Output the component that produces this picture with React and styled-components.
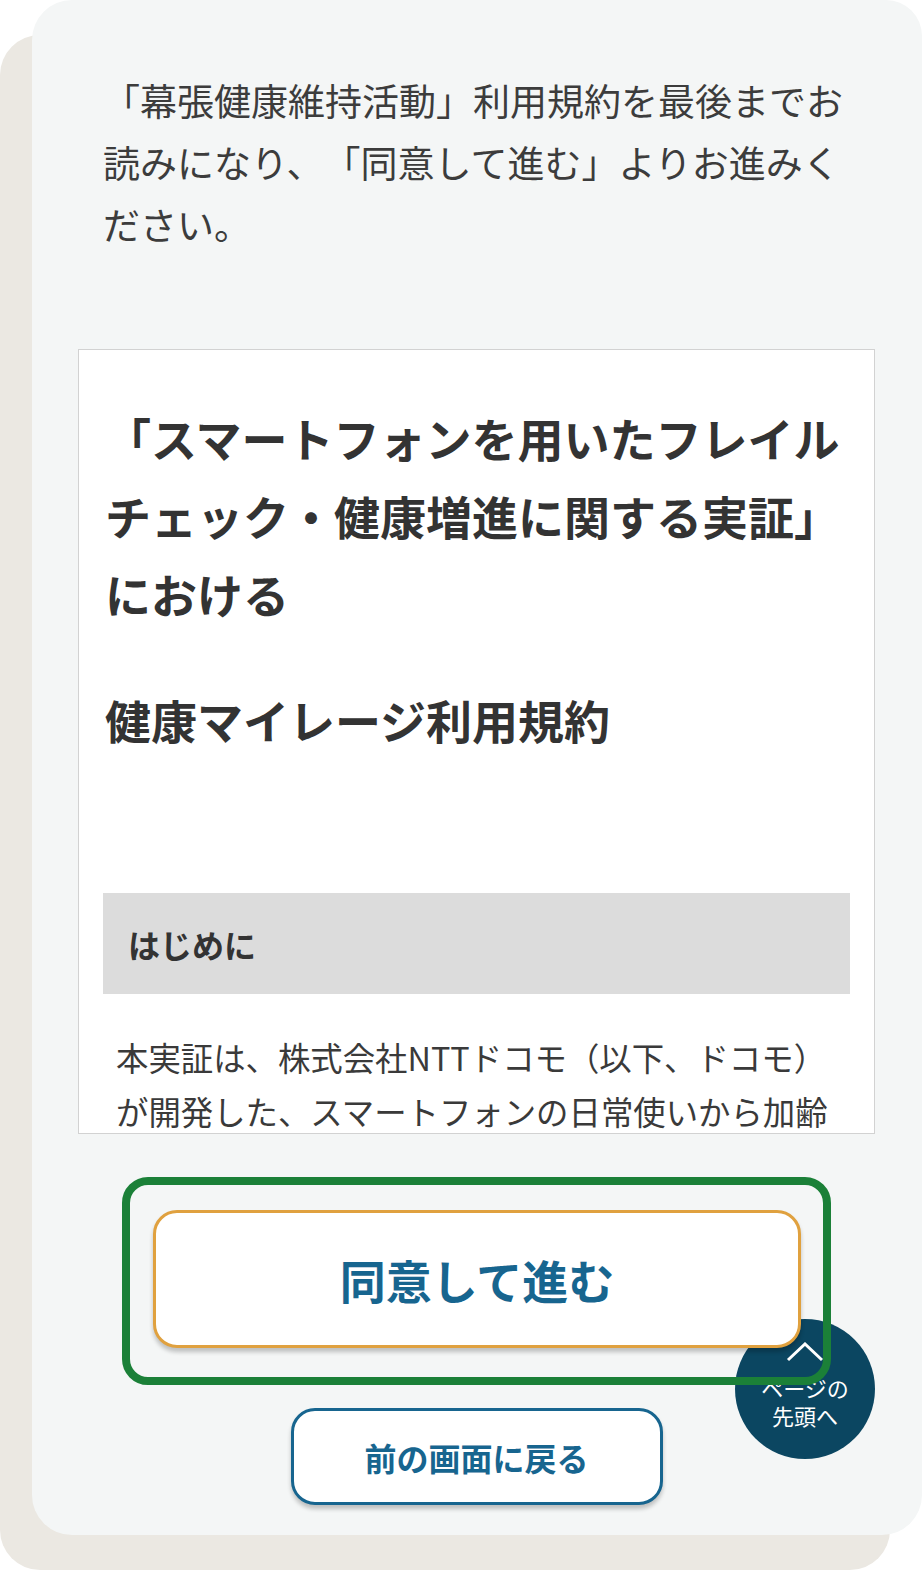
import React from 'react';
import styled, { createGlobalStyle } from 'styled-components';

const GlobalStyle = createGlobalStyle`
  html, body {
    margin: 0;
    padding: 0;
    background: #ffffff;
  }
  body {
    font-family: "Noto Sans CJK JP", "Noto Sans", sans-serif;
    color: #3a3a3a;
    text-spacing-trim: space-all;
  }
  * {
    box-sizing: border-box;
  }
`;

const Screen = styled.div`
  width: 922px;
  height: 1570px;
  overflow: hidden;
`;

const Card = styled.main`
  position: relative;
  margin-left: 32px;
  width: 890px;
  min-height: 1535px;
  padding: 69px 47px 30px 46px;
  background: #f4f6f6;
  border-radius: 40px 36px 40px 40px;
  box-shadow: -32px 35px 0 0 #ebe8e2;
`;

const Intro = styled.p`
  margin: 0;
  padding: 0 20px 0 25px;
  font-size: 37px;
  line-height: 62px;
  color: #3c3c3c;
  text-spacing-trim: space-all;
`;

const TermsBox = styled.section`
  margin-top: 94px;
  height: 785px;
  padding: 48px 24px 0 24px;
  background: #ffffff;
  border: 1px solid #d2d2d2;
  overflow: hidden;
`;

const Title = styled.h1`
  margin: ${p => (p.$gap ? '48px' : '0')} 0 0;
  padding-left: 2px;
  font-size: 46px;
  line-height: 78px;
  font-weight: 700;
  color: #333333;
`;

const SectionBar = styled.h3`
  margin: 135px 0 0;
  height: 101px;
  padding-left: 25px;
  display: flex;
  align-items: center;
  background: #dcdcdc;
  font-size: 32px;
  font-weight: 700;
  color: #333333;
`;

const Body = styled.p`
  margin: 36px 0 0;
  padding: 0 4px 0 13px;
  font-size: 32.4px;
  line-height: 54px;
  color: #3a3a3a;
`;

const FocusRing = styled.div`
  position: relative;
  z-index: 1;
  width: 709px;
  margin: 43px auto 0;
  padding: 25px 22px 29px 23px;
  border: 8px solid #1b8038;
  border-radius: 26px;
`;

const Button = styled.button`
  display: flex;
  align-items: center;
  justify-content: center;
  width: ${p => p.$width}px;
  height: ${p => p.$height}px;
  margin: 0 auto;
  padding: 0;
  background: #ffffff;
  border: 3px solid ${p => p.$border};
  border-radius: 24px;
  box-shadow: 0 4px 4px rgba(0, 0, 0, 0.22);
  font-family: "Noto Sans CJK JP", "Noto Sans", sans-serif;
  font-size: ${p => p.$size}px;
  font-weight: 700;
  color: #17658f;
  cursor: pointer;
`;

const BackRow = styled.div`
  margin-top: 23px;
`;

const PageTop = styled.a`
  position: absolute;
  right: 47px;
  bottom: 76px;
  z-index: 0;
  width: 140px;
  height: 140px;
  border-radius: 50%;
  background: #0b4661;
  display: flex;
  flex-direction: column;
  align-items: center;
  padding-top: 23px;
  color: #ffffff;
  font-size: 22px;
  line-height: 28px;
  text-align: center;
  text-decoration: none;
`;

const PageTopLabel = styled.span`
  margin-top: 11px;
`;

function Chevron() {
  return (
    <svg width="40" height="20" viewBox="0 0 40 20">
      <polyline points="3,18 20,2 37,18" fill="none" stroke="#ffffff" strokeWidth="3" />
    </svg>
  );
}

export default function App() {
  return (
    <Screen>
      <GlobalStyle />
      <Card>
        <Intro>
          「幕張健康維持活動」利用規約を最後までお読みになり、「同意して進む」よりお進みください。
        </Intro>

        <TermsBox>
          <Title>「スマートフォンを用いたフレイルチェック・健康増進に関する実証」における</Title>
          <Title $gap>健康マイレージ利用規約</Title>
          <SectionBar>はじめに</SectionBar>
          <Body>
            本実証は、株式会社NTTドコモ（以下、ドコモ）が開発した、スマートフォンの日常使いから加齢による心身の活力の低下を推定する技術を活用し、健康増進に関する効果を検証するものです。
          </Body>
        </TermsBox>

        <FocusRing>
          <Button $width={648} $height={138} $size={46} $border="#e0a13f">
            同意して進む
          </Button>
        </FocusRing>

        <BackRow>
          <Button $width={372} $height={97} $size={32} $border="#17658f">
            前の画面に戻る
          </Button>
        </BackRow>

        <PageTop href="#top">
          <Chevron />
          <PageTopLabel>
            ページの
            <br />
            先頭へ
          </PageTopLabel>
        </PageTop>
      </Card>
    </Screen>
  );
}
